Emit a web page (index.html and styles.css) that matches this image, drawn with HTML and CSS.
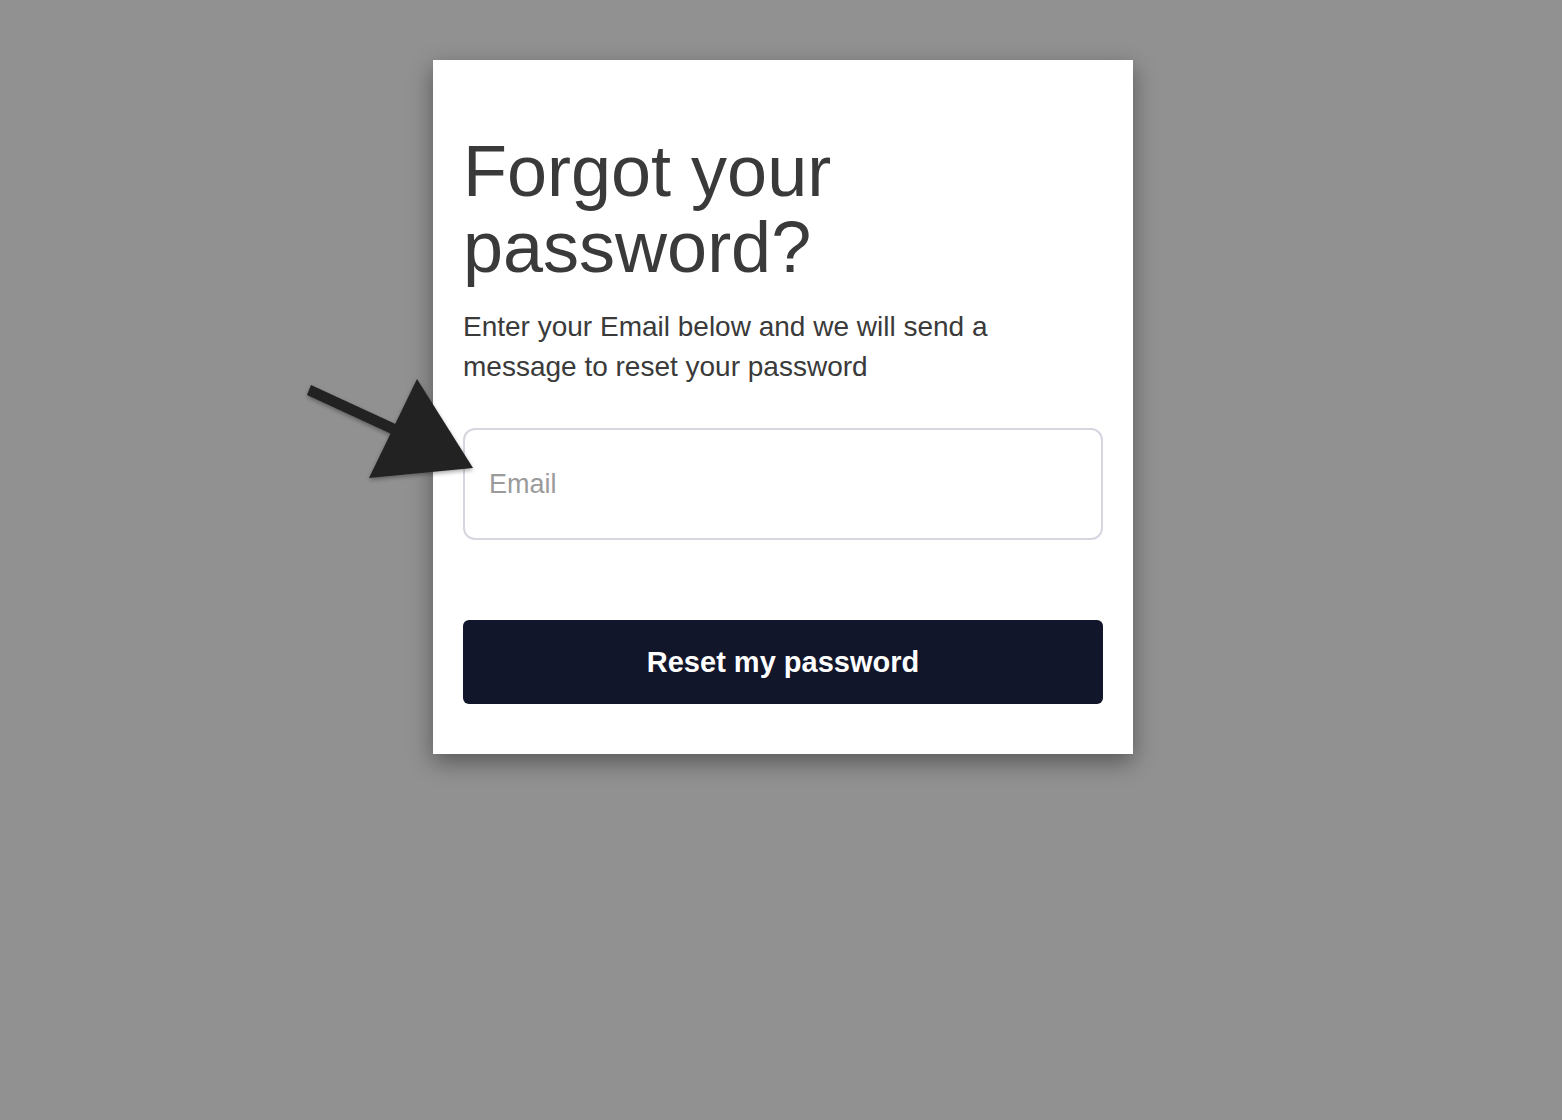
FILE: index.html
```html
<!DOCTYPE html>
<html lang="en">
<head>
    <meta charset="UTF-8">
    <meta name="viewport" content="width=device-width, initial-scale=1.0">
    <title>Forgot your password?</title>
    <link rel="stylesheet" href="styles.css">
</head>
<body>
    <div class="card">
        <h1>Forgot your password?</h1>
        <p class="intro">Enter your Email below and we will send a message to reset your password</p>
        <form class="reset-form">
            <input type="email" name="email" placeholder="Email">
            <button type="submit">Reset my password</button>
        </form>
    </div>

    <!-- pointer arrow at the email field -->
    <svg class="pointer" width="200" height="130" viewBox="300 370 200 130">
        <defs>
            <filter id="soft" x="-20%" y="-20%" width="140%" height="140%">
                <feDropShadow dx="0" dy="2" stdDeviation="2" flood-opacity="0.35"/>
            </filter>
        </defs>
        <g filter="url(#soft)" fill="#222">
            <polygon points="311,385 402,427 398,437 307,395"/>
            <polygon points="417,379 473,468 369,478"/>
        </g>
    </svg>
</body>
</html>
```

FILE: styles.css
```css
body {
    margin: 0;
    background-color: #919191;
    font-family: "Liberation Sans", Arial, sans-serif;
    color: #3a3a3a;
    min-height: 1120px;
}
.card {
    width: 640px;
    margin: 60px auto 0;
    padding: 30px 30px 50px;
    background-color: #fff;
    box-shadow: 0 8px 22px rgba(0, 0, 0, 0.4);
    position: relative;
    left: 2px;
}
h1 {
    margin: 43px 0 0;
    font-size: 72px;
    font-weight: normal;
    line-height: 76px;
    width: 400px;
}
.intro {
    margin: 22px 0 0;
    font-size: 28px;
    line-height: 40px;
    width: 560px;
}
.reset-form {
    display: flex;
    flex-direction: column;
    gap: 80px;
    margin-top: 41px;
}
.reset-form input {
    height: 112px;
    box-sizing: border-box;
    padding: 0 24px;
    border: 2px solid #d6d5e0;
    border-radius: 12px;
    font-family: inherit;
    font-size: 27px;
    color: #3a3a3a;
    outline: none;
}
.reset-form input::placeholder {
    color: #9b9b9b;
}
.reset-form button {
    height: 84px;
    border: none;
    border-radius: 6px;
    background-color: #11162b;
    color: #fff;
    font-family: inherit;
    font-size: 29px;
    font-weight: bold;
    cursor: pointer;
}
.pointer {
    position: absolute;
    left: 300px;
    top: 370px;
    overflow: visible;
}
```
